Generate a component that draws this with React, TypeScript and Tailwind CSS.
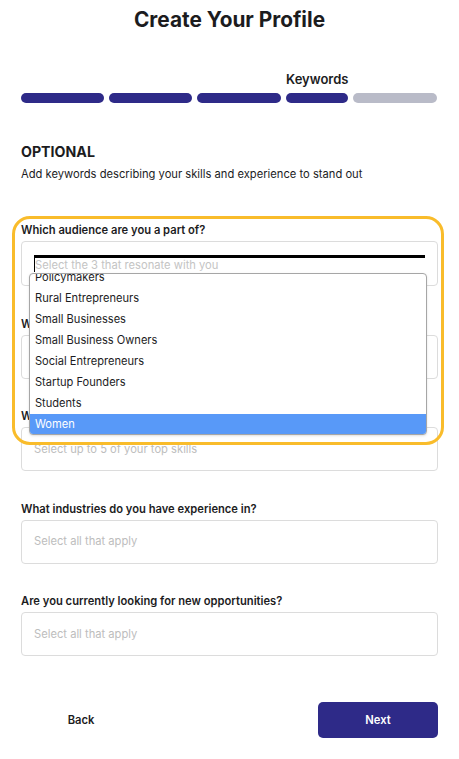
const options = [
  "Policymakers",
  "Rural Entrepreneurs",
  "Small Businesses",
  "Small Business Owners",
  "Social Entrepreneurs",
  "Startup Founders",
  "Students",
  "Women",
];

const fields = [
  { label: "What is your area of expertise?", placeholder: "Select all that apply" },
  { label: "What are your top skills?", placeholder: "Select up to 5 of your top skills" },
  { label: "What industries do you have experience in?", placeholder: "Select all that apply" },
  { label: "Are you currently looking for new opportunities?", placeholder: "Select all that apply" },
];

function Field({ label, placeholder }: { label: string; placeholder: string }) {
  return (
    <div className="mt-[29.6px]">
      <p className="text-[11.2px] font-semibold leading-[16px] text-[#1c1c1e]">{label}</p>
      <div className="mt-[3px] flex h-[44px] items-center rounded-[4px] border border-[#dcdcdc] px-[12px] text-[11.2px] text-[#bdbdbd]">
        {placeholder}
      </div>
    </div>
  );
}

export default function App() {
  return (
    <div className="relative min-h-[759px] bg-white px-[21px] pt-[6px] font-['Inter',sans-serif] text-[#1c1c1e]">
      <h1 className="text-center text-[20.8px] font-bold leading-[28px]">Create Your Profile</h1>

      <div className="mt-[37px] grid grid-cols-[83px_83px_84px_62px_84px] gap-x-[5px]">
        <span className="col-start-4 mb-[6px] text-center text-[13px] font-semibold leading-[16px]">Keywords</span>
        <div className="col-start-1 h-[10px] rounded-full bg-[#2e2a88]" />
        <div className="h-[10px] rounded-full bg-[#2e2a88]" />
        <div className="h-[10px] rounded-full bg-[#2e2a88]" />
        <div className="h-[10px] rounded-full bg-[#2e2a88]" />
        <div className="h-[10px] rounded-full bg-[#b9bbc8]" />
      </div>

      <h2 className="mt-[39px] text-[14.2px] font-bold leading-[20px]">OPTIONAL</h2>
      <p className="mt-[4px] text-[11.2px] leading-[16px]">Add keywords describing your skills and experience to stand out</p>

      <div className="relative mt-[40px]">
        <p className="text-[11.2px] font-semibold leading-[16px]">Which audience are you a part of?</p>
        <div className="relative mt-[3px] h-[45px] rounded-[4px] border border-[#dcdcdc] px-[12px] pt-[13px]">
          <div className="h-[17px] border-l border-t-[3px] border-black text-[11.2px] leading-[14px] text-[#c4c4c4]">
            Select the 3 that resonate with you
          </div>
          <div className="absolute left-[7px] top-[31px] z-10 h-[162px] w-[398px] overflow-hidden rounded-[4px] border border-[#a6a6a6] bg-white text-[11.1px] text-[#1c1c1e] shadow-sm">
            <div className="-mt-[7px]">
              {options.map((o) => (
                <div
                  key={o}
                  className={
                    o === "Women"
                      ? "flex h-[21px] items-center bg-[#5899f8] px-[5px] text-white"
                      : "flex h-[21px] items-center px-[5px]"
                  }
                >
                  {o}
                </div>
              ))}
            </div>
          </div>
        </div>
        <div className="pointer-events-none absolute -left-[9px] -top-[6px] z-20 h-[229px] w-[432px] rounded-[18px] border-[3px] border-[#f9bc2b]" />
      </div>

      {fields.map((f) => (
        <Field key={f.label} label={f.label} placeholder={f.placeholder} />
      ))}

      <div className="mt-[46px] flex justify-between">
        <button className="h-[36px] w-[120px] text-[11.2px] font-semibold">Back</button>
        <button className="h-[36px] w-[120px] rounded-[5px] bg-[#2e2a88] text-[11.2px] font-semibold text-white">Next</button>
      </div>
    </div>
  );
}
